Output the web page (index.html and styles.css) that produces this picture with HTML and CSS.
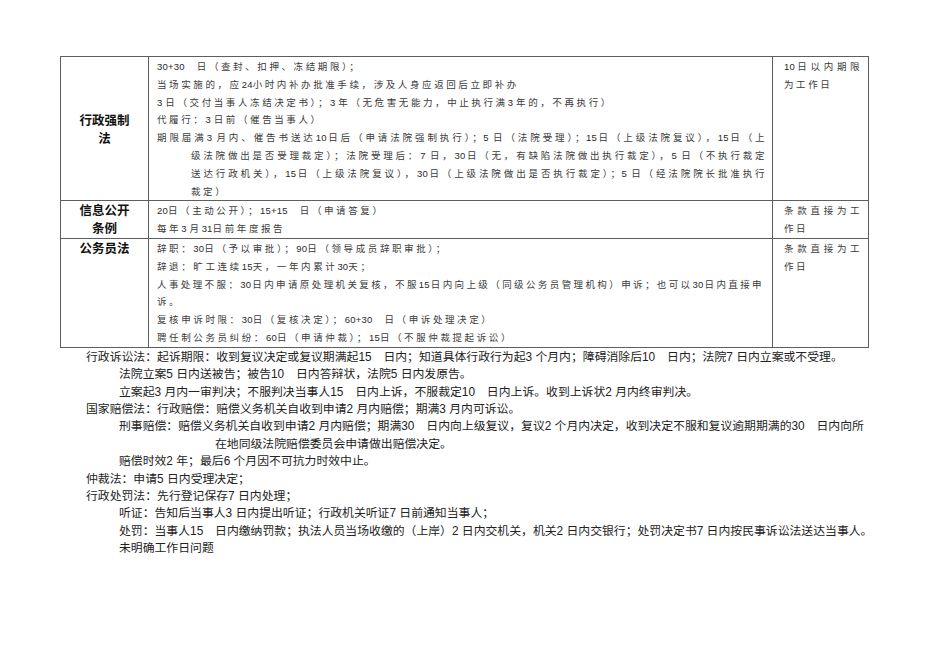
FILE: index.html
```html
<!DOCTYPE html>
<html lang="zh-CN">
<head>
<meta charset="utf-8">
<title>工作日期限</title>
<link rel="stylesheet" href="styles.css">
</head>
<body>
<div class="page">
  <table class="grid">
    <colgroup>
      <col class="c1">
      <col class="c2">
      <col class="c3">
    </colgroup>
    <tr class="r1">
      <td class="head mid">行政强制<br>法</td>
      <td class="cell">
        <div class="ln"><span class="n">30+30</span>　日（查封、扣押、冻结期限）；</div>
        <div class="ln">当场实施的，应<span class="n">24</span>小时内补办批准手续，涉及人身应返回后立即补办</div>
        <div class="ln"><span class="n">3 </span>日（交付当事人冻结决定书）；<span class="n">3 </span>年（无危害无能力，中止执行满<span class="n">3 </span>年的，不再执行）</div>
        <div class="ln">代履行：<span class="n">3 </span>日前（催告当事人）</div>
        <div class="ln j">期限届满<span class="n">3 </span>月内、催告书送达<span class="n">10</span>日后（申请法院强制执行）；<span class="n">5 </span>日（法院受理）；<span class="n">15</span>日（上级法院复议），<span class="n">15</span>日（上</div>
        <div class="ln j ind">级法院做出是否受理裁定）；法院受理后：<span class="n">7 </span>日，<span class="n">30</span>日（无，有缺陷法院做出执行裁定），<span class="n">5 </span>日（不执行裁定</div>
        <div class="ln j ind">送达行政机关），<span class="n">15</span>日（上级法院复议），<span class="n">30</span>日（上级法院做出是否执行裁定）；<span class="n">5 </span>日（经法院院长批准执行</div>
        <div class="ln ind">裁定）</div>
      </td>
      <td class="cell side">
        <div class="ln j"><span class="n">10</span>日以内期限</div>
        <div class="ln">为工作日</div>
      </td>
    </tr>
    <tr class="r2">
      <td class="head">信息公开<br>条例</td>
      <td class="cell">
        <div class="ln"><span class="n">20</span>日（主动公开）；<span class="n">15+15</span>　日（申请答复）</div>
        <div class="ln">每年<span class="n">3 </span>月<span class="n">31</span>日前年度报告</div>
      </td>
      <td class="cell side">
        <div class="ln j">条款直接为工</div>
        <div class="ln">作日</div>
      </td>
    </tr>
    <tr class="r3">
      <td class="head">公务员法</td>
      <td class="cell">
        <div class="ln">辞职：<span class="n">30</span>日（予以审批）；<span class="n">90</span>日（领导成员辞职审批）；</div>
        <div class="ln">辞退：旷工连续<span class="n">15</span>天，一年内累计<span class="n">30</span>天；</div>
        <div class="ln j wide">人事处理不服：<span class="n">30</span>日内申请原处理机关复核，不服<span class="n">15</span>日内向上级（同级公务员管理机构）申诉；也可以<span class="n">30</span>日内直接申</div>
        <div class="ln">诉。</div>
        <div class="ln">复核申诉时限：<span class="n">30</span>日（复核决定）；<span class="n">60+30</span>　日（申诉处理决定）</div>
        <div class="ln">聘任制公务员纠纷：<span class="n">60</span>日（申请仲裁）；<span class="n">15</span>日（不服仲裁提起诉讼）</div>
      </td>
      <td class="cell side">
        <div class="ln j">条款直接为工</div>
        <div class="ln">作日</div>
      </td>
    </tr>
  </table>

  <div class="notes">
    <div>行政诉讼法：起诉期限：收到复议决定或复议期满起15　日内；知道具体行政行为起3 个月内；障碍消除后10　日内；法院7 日内立案或不受理。</div>
    <div class="l1">法院立案5 日内送被告；被告10　日内答辩状，法院5 日内发原告。</div>
    <div class="l1">立案起3 月内一审判决；不服判决当事人15　日内上诉，不服裁定10　日内上诉。收到上诉状2 月内终审判决。</div>
    <div>国家赔偿法：行政赔偿：赔偿义务机关自收到申请2 月内赔偿；期满3 月内可诉讼。</div>
    <div class="l1">刑事赔偿：赔偿义务机关自收到申请2 月内赔偿；期满30　日内向上级复议，复议2 个月内决定，收到决定不服和复议逾期期满的30　日内向所</div>
    <div class="l2">在地同级法院赔偿委员会申请做出赔偿决定。</div>
    <div class="l1">赔偿时效2 年；最后6 个月因不可抗力时效中止。</div>
    <div>仲裁法：申请5 日内受理决定；</div>
    <div>行政处罚法：先行登记保存7 日内处理；</div>
    <div class="l1">听证：告知后当事人3 日内提出听证；行政机关听证7 日前通知当事人；</div>
    <div class="l1">处罚：当事人15　日内缴纳罚款；执法人员当场收缴的（上岸）2 日内交机关，机关2 日内交银行；处罚决定书7 日内按民事诉讼法送达当事人。</div>
    <div class="l1">未明确工作日问题</div>
  </div>
</div>
</body>
</html>
```

FILE: styles.css
```css
html, body {
  margin: 0;
  padding: 0;
  background: #ffffff;
}

body {
  font-family: "Liberation Sans", "Noto Sans CJK SC", sans-serif;
  color: #222222;
}

.page {
  padding: 56px 0 0 60px;
}

.grid {
  border-collapse: collapse;
  table-layout: fixed;
  width: 808px;
}

.c1 { width: 88px; }
.c2 { width: 624px; }
.c3 { width: 96px; }

.grid td {
  border: 1px solid #5e5e5e;
  padding: 0;
  vertical-align: top;
}

.grid td.head {
  font-family: "Noto Sans CJK SC", sans-serif;
  font-weight: bold;
  font-size: 12.5px;
  line-height: 17.8px;
  text-align: center;
  color: #111111;
}

.grid td.mid {
  vertical-align: middle;
}

.grid td.cell {
  padding: 1px 6px 0 8px;
  font-size: 9.5px;
  letter-spacing: 2.6px;
  line-height: 17.8px;
  color: #3c3c3c;
}

.grid td.side {
  padding: 1px 7px 0 11px;
}

.ln {
  white-space: nowrap;
  overflow: hidden;
}

.j {
  text-align: justify;
  text-align-last: justify;
  letter-spacing: 1.4px;
}

.wide {
  margin-right: 3px;
}

.ind {
  padding-left: 34px;
}

.n {
  font-family: "Liberation Sans", sans-serif;
  letter-spacing: 0.2px;
  color: #2a2a2a;
}

.notes {
  margin-left: 26px;
  margin-top: 1px;
  font-size: 11.85px;
  line-height: 17.4px;
  color: #222222;
  white-space: nowrap;
}

.l1 {
  padding-left: 33px;
}

.l2 {
  padding-left: 129px;
}
```
